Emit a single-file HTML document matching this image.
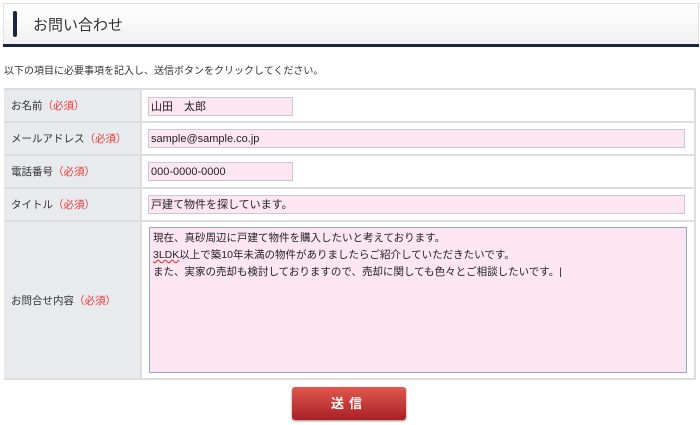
<!DOCTYPE html>
<html><head><meta charset="utf-8"><style>
body{margin:0;width:700px;height:425px;background:#fff;font-family:"Liberation Sans","Noto Sans CJK JP",sans-serif;color:#333;position:relative;overflow:hidden}
.hd{position:absolute;left:3px;top:3px;width:694px;height:40px;background:linear-gradient(#fff,#f1f1f1);border:1px solid #e2e2e2;border-bottom:none}
.hd:after{content:"";position:absolute;left:-1px;right:-1px;bottom:-3px;height:3px;background:#1a2544}
.bar{position:absolute;left:9px;top:7px;width:4px;height:26px;background:#1a2544;border-radius:2px}
.ht{position:absolute;left:29px;top:10px;font-size:15px;color:#333}
.intro{position:absolute;left:4px;top:62px;font-size:10px}
.row{position:absolute;left:4px;width:692px;border-top:2px solid #ddd;border-right:2px solid #ddd;box-sizing:border-box}
.lab{position:absolute;left:0;top:0;bottom:0;width:138px;box-sizing:border-box;background:#e8ebee;border-right:2px solid #ddd;font-size:10.5px;display:flex;align-items:center;padding-left:7px}
.lab span{color:#e33}
.in{position:absolute;background:#fde6f2;border:1px solid #c9c9d2;font-size:11px;padding:1px 0 0 2px;box-sizing:border-box;line-height:17px;color:#222}
.btm{position:absolute;left:4px;top:378px;width:692px;border-top:2px solid #ddd}
.btn{position:absolute;left:292px;top:387px;width:114px;height:33px;border-radius:3px;background:linear-gradient(#e0584e,#a92026);color:#fff;font-weight:bold;font-size:13px;text-align:center;line-height:33px;letter-spacing:5px;box-shadow:0 1px 2px #888}
</style></head><body>
<div class="hd"><div class="bar"></div><div class="ht">お問い合わせ</div></div>
<div class="intro">以下の項目に必要事項を記入し、送信ボタンをクリックしてください。</div>
<div class="row" style="top:88px;height:33px"><div class="lab">お名前<span>（必須）</span></div></div>
<div class="row" style="top:121px;height:33px"><div class="lab">メールアドレス<span>（必須）</span></div></div>
<div class="row" style="top:154px;height:33px"><div class="lab">電話番号<span>（必須）</span></div></div>
<div class="row" style="top:187px;height:33px"><div class="lab">タイトル<span>（必須）</span></div></div>
<div class="row" style="top:220px;height:158px"><div class="lab">お問合せ内容<span>（必須）</span></div></div>
<div class="btm"></div>
<div class="in" style="left:148px;top:97px;width:145px;height:19px">山田　太郎</div>
<div class="in" style="left:148px;top:129px;width:537px;height:19px">sample@sample.co.jp</div>
<div class="in" style="left:148px;top:162px;width:145px;height:19px">000-0000-0000</div>
<div class="in" style="left:148px;top:195px;width:537px;height:19px">戸建て物件を探しています。</div>
<div class="in" style="left:149px;top:227px;width:538px;height:146px;border-color:#8fa8cc;padding:2px 3px;line-height:17px;font-size:10.5px">現在、真砂周辺に戸建て物件を購入したいと考えております。<br><span style="text-decoration:underline wavy #e33">3LDK</span>以上で築10年未満の物件がありましたらご紹介していただきたいです。<br>また、実家の売却も検討しておりますので、売却に関しても色々とご相談したいです。|</div>
<div class="btn">送信</div>
</body></html>
